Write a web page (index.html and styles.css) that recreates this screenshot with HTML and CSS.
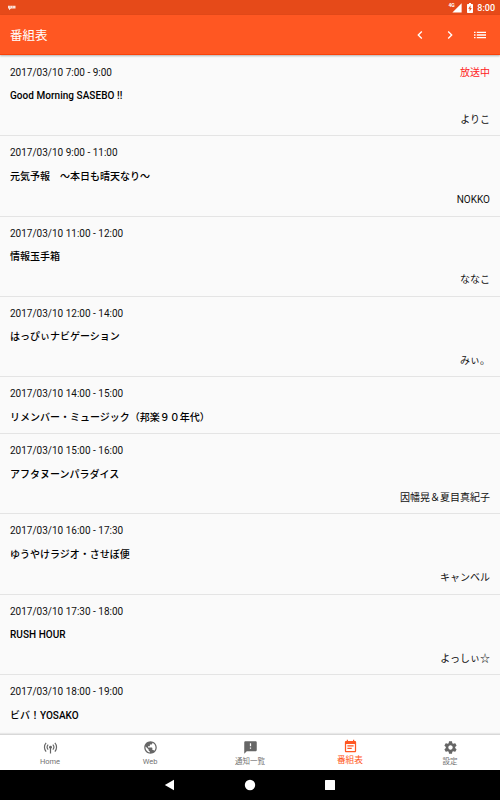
FILE: index.html
```html
<!DOCTYPE html>
<html lang="ja">
<head>
<meta charset="utf-8">
<title>番組表</title>
<link rel="stylesheet" href="styles.css">
</head>
<body>
<div class="screen">
  <div class="status">
    <svg class="notice" width="10" height="6" viewBox="0 0 10 6"><path d="M1 .8h7.500v2.700H4L2 5.200V3.500H1z" fill="#fff" opacity=".85"/><path d="M3.200 .8v2.200M5.600 .8v2.200" stroke="#e64a19" stroke-width=".3"/></svg>
    <div class="status-right">
      <span class="net">4G</span>
      <svg class="signal" width="10" height="10" viewBox="0 0 10 10"><path d="M9.6 .3v9.2H.4z" fill="#fff"/></svg>
      <svg class="battery" width="6" height="10" viewBox="0 0 6 10"><path d="M2 0h2v1h1.3q.7 0 .7.7v7.6q0 .7-.7.7H.7Q0 10 0 9.3V1.7Q0 1 .7 1H2z" fill="#fff"/><path d="M3.6 2.2L1.3 5.8h1.3v2.6L4.8 4.9H3.5z" fill="#e64a19"/></svg>
      <span class="clock">8:00</span>
    </div>
  </div>
  <header class="toolbar">
    <h1>番組表</h1>
    <div class="actions">
      <svg viewBox="0 0 24 24"><path d="M15.41 7.41L14 6l-6 6 6 6 1.41-1.41L10.83 12z"/></svg>
      <svg viewBox="0 0 24 24"><path d="M10 6L8.59 7.41 13.17 12l-4.58 4.59L10 18l6-6z"/></svg>
      <svg viewBox="0 0 24 24"><path d="M3 7h2.300v2H3zM3 11h2.300v2H3zM3 15h2.300v2H3zM7.200 7h13.800v2H7.200zM7.200 11h13.800v2H7.200zM7.200 15h13.800v2H7.200z"/></svg>
    </div>
  </header>
  <main class="list">
    <article class="row"><div class="when"><span>2017/03/10 7:00 - 9:00</span><span class="live">放送中</span></div><div class="title latin">Good Morning SASEBO !!</div><div class="host">よりこ</div></article>
    <article class="row"><div class="when">2017/03/10 9:00 - 11:00</div><div class="title">元気予報　～本日も晴天なり～</div><div class="host">NOKKO</div></article>
    <article class="row"><div class="when">2017/03/10 11:00 - 12:00</div><div class="title">情報玉手箱</div><div class="host">ななこ</div></article>
    <article class="row"><div class="when">2017/03/10 12:00 - 14:00</div><div class="title">はっぴぃナビゲーション</div><div class="host">みぃ。</div></article>
    <article class="row"><div class="when">2017/03/10 14:00 - 15:00</div><div class="title">リメンバー・ミュージック（邦楽９０年代）</div></article>
    <article class="row"><div class="when">2017/03/10 15:00 - 16:00</div><div class="title">アフタヌーンパラダイス</div><div class="host">因幡晃＆夏目真紀子</div></article>
    <article class="row"><div class="when">2017/03/10 16:00 - 17:30</div><div class="title">ゆうやけラジオ・させぼ便</div><div class="host">キャンベル</div></article>
    <article class="row"><div class="when">2017/03/10 17:30 - 18:00</div><div class="title latin">RUSH HOUR</div><div class="host">よっしぃ☆</div></article>
    <article class="row"><div class="when">2017/03/10 18:00 - 19:00</div><div class="title">ビバ！YOSAKO</div></article>
  </main>
  <nav class="tabs">
    <div class="tab">
      <svg viewBox="0 0 24 24"><g fill="none" stroke="#666" stroke-width="1.900"><path d="M5 4.500a10.500 10.500 0 0 0 0 14M19 4.500a10.500 10.500 0 0 1 0 14M8.300 7.500a6 6 0 0 0 0 8M15.700 7.500a6 6 0 0 1 0 8M12 12v9.500"/></g><circle cx="12" cy="11.500" r="2.300"/></svg>
      <span>Home</span>
    </div>
    <div class="tab">
      <svg viewBox="0 0 24 24"><path d="M12 2C6.480 2 2 6.480 2 12s4.480 10 10 10 10-4.480 10-10S17.520 2 12 2zm-1 17.930c-3.950-.49-7-3.850-7-7.930 0-.62.08-1.210.21-1.790L9 15v1c0 1.100.9 2 2 2v1.930zm6.900-2.540c-.26-.81-1-1.390-1.900-1.390h-1v-3c0-.55-.45-1-1-1H8v-2h2c.55 0 1-.45 1-1V7h2c1.100 0 2-.9 2-2v-.41c2.930 1.190 5 4.060 5 7.410 0 2.080-.8 3.970-2.100 5.390z"/></svg>
      <span>Web</span>
    </div>
    <div class="tab">
      <svg viewBox="0 0 24 24"><path d="M20 2H4c-1.100 0-1.990.9-1.990 2L2 22l4-4h14c1.100 0 2-.9 2-2V4c0-1.100-.9-2-2-2zm-7 12h-2v-2h2v2zm0-4h-2V5h2v5z"/></svg>
      <span>通知一覧</span>
    </div>
    <div class="tab active">
      <svg viewBox="0 0 24 24"><path d="M17 10H7v2h10v-2zm2-7h-1V1h-2v2H8V1H6v2H5c-1.110 0-1.990.9-1.990 2L3 19c0 1.100.89 2 2 2h14c1.100 0 2-.9 2-2V5c0-1.100-.9-2-2-2zm0 16H5V8h14v11zm-5-5H7v2h7v-2z"/></svg>
      <span>番組表</span>
    </div>
    <div class="tab">
      <svg viewBox="0 0 24 24"><path d="M19.430 12.980c.04-.32.07-.64.07-.98s-.03-.66-.07-.98l2.110-1.650c.19-.15.24-.42.12-.64l-2-3.460c-.12-.22-.39-.3-.61-.22l-2.490 1c-.52-.4-1.080-.73-1.690-.98l-.38-2.650C14.460 2.180 14.250 2 14 2h-4c-.25 0-.46.18-.49.42l-.38 2.650c-.61.25-1.170.59-1.690.98l-2.490-1c-.23-.09-.49 0-.61.22l-2 3.460c-.13.22-.07.49.12.64l2.110 1.650c-.04.32-.07.65-.07.98s.03.66.07.98l-2.110 1.650c-.19.15-.24.42-.12.64l2 3.460c.12.22.39.3.61.22l2.490-1c.52.4 1.080.73 1.690.98l.38 2.650c.03.24.24.42.49.42h4c.25 0 .46-.18.49-.42l.38-2.650c.61-.25 1.170-.59 1.690-.98l2.490 1c.23.09.49 0 .61-.22l2-3.460c.12-.22.07-.49-.12-.64l-2.110-1.650zM12 15.500c-1.930 0-3.500-1.570-3.500-3.500s1.570-3.500 3.500-3.500 3.500 1.570 3.500 3.500-1.570 3.500-3.500 3.500z"/></svg>
      <span>設定</span>
    </div>
  </nav>
  <div class="system">
    <svg viewBox="0 0 12 12"><path d="M.8 6L10 .8v10.400z"/></svg>
    <svg viewBox="0 0 12 12"><circle cx="6" cy="6" r="5.200"/></svg>
    <svg viewBox="0 0 12 12"><rect x="1" y="1" width="10" height="10" rx=".5"/></svg>
  </div>
</div>
</body>
</html>
```
FILE: styles.css
```css
* { box-sizing: border-box; }
body {
  margin: 0;
  font-family: Roboto, "Noto Sans CJK JP", sans-serif;
  font-size: 10px;
  color: #111;
}
.screen {
  width: 500px;
  height: 800px;
  display: flex;
  flex-direction: column;
  overflow: hidden;
  background: #fafafa;
}
.status {
  flex: none;
  height: 15px;
  display: flex;
  align-items: center;
  justify-content: space-between;
  padding: 0 5px 0 7px;
  background: #e64a19;
  color: #fff;
}
.status-right { display: flex; align-items: center; height: 15px; }
.net { font-size: 5px; font-weight: 700; line-height: 5px; margin-bottom: 5px; }
.signal { margin-left: -2.500px; }
.battery { margin: 0 4px 0 5px; }
.clock { font-size: 9px; font-weight: 500; line-height: 15px; padding-top: 1px; }
.toolbar {
  flex: none;
  position: relative;
  height: 40px;
  display: flex;
  align-items: center;
  justify-content: space-between;
  padding: 0 12px 0 10px;
  background: #ff5722;
  border-bottom: 1px solid #fa4208;
  box-shadow: 0 1px 2px rgba(0, 0, 0, .3);
}
.toolbar h1 { margin: 3px 0 0; font-size: 12.500px; line-height: 20px; font-weight: 400; color: #fff; }
.actions { display: flex; gap: 14px; }
.actions svg { width: 16px; height: 16px; fill: #fff; }
.list { flex: 1; min-height: 0; overflow: hidden; padding-top: 1px; }
.row {
  padding: 5px 10px 4.150px;
  border-bottom: 1px solid #e4e4e4;
  line-height: 23.400px;
}
.row:last-child { border-bottom: 0; }
.when { display: flex; justify-content: space-between; height: 23.400px; }
.live { color: #f22; }
.title { height: 23.400px; font-weight: 500; color: #000; }
.latin { letter-spacing: .04px; }
.host { height: 23.400px; text-align: right; }
.tabs {
  flex: none;
  height: 36px;
  display: flex;
  background: #fff;
  border-top: 1px solid #d8d8d8;
  box-shadow: 0 -1px 1px rgba(0, 0, 0, .07);
}
.tab {
  flex: 1;
  display: flex;
  flex-direction: column;
  align-items: center;
  padding-top: 5px;
  font-size: 7.500px;
  line-height: 14px;
  color: #737373;
}
.tab svg { flex: none; width: 15px; height: 15px; fill: #666; }
.tab.active { padding-top: 4px; font-size: 8.750px; line-height: 13px; color: #ff5722; }
.tab.active svg { fill: #ff5722; }
.system {
  flex: none;
  height: 30px;
  display: flex;
  align-items: center;
  justify-content: center;
  gap: 68px;
  background: #000;
}
.system svg { width: 12px; height: 12px; fill: #fff; }
```
